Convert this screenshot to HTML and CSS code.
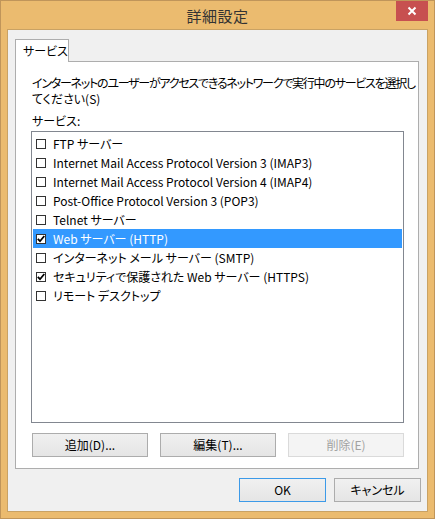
FILE: index.html
```html
<!DOCTYPE html>
<html lang="ja">
<head>
<meta charset="utf-8">
<link rel="stylesheet" href="styles.css">
</head>
<body>
<div class="window">
  <div class="titlebar">
    <div class="title">詳細設定</div>
    <div class="close"><svg width="10" height="10" viewBox="0 0 10 10"><path d="M1.5 1.5 L8.5 8.5 M8.5 1.5 L1.5 8.5" stroke="#fff" stroke-width="2" fill="none"/></svg></div>
  </div>
  <div class="client">
    <div class="tabs"><div class="tab">サービス</div></div>
    <div class="panel">
      <p class="desc"><span class="line">インターネットのユーザーがアクセスできるネットワークで実行中のサービスを選択し</span><span class="line">てください(S)</span></p>
      <div class="label">サービス:</div>
      <div class="listbox">
        <div class="row"><span class="cb"></span><span>FTP サーバー</span></div>
        <div class="row"><span class="cb"></span><span>Internet Mail Access Protocol Version 3 (IMAP3)</span></div>
        <div class="row"><span class="cb"></span><span>Internet Mail Access Protocol Version 4 (IMAP4)</span></div>
        <div class="row"><span class="cb"></span><span>Post-Office Protocol Version 3 (POP3)</span></div>
        <div class="row"><span class="cb"></span><span>Telnet サーバー</span></div>
        <div class="row selected"><span class="cb checked"><svg width="8" height="8" viewBox="0 0 8 8"><path d="M0.8 3.8 L3 6.2 L7.3 1" stroke="#000" stroke-width="1.8" fill="none"/></svg></span><span>Web サーバー (HTTP)</span></div>
        <div class="row"><span class="cb"></span><span>インターネット メール サーバー (SMTP)</span></div>
        <div class="row"><span class="cb checked"><svg width="8" height="8" viewBox="0 0 8 8"><path d="M0.8 3.8 L3 6.2 L7.3 1" stroke="#000" stroke-width="1.8" fill="none"/></svg></span><span>セキュリティで保護された Web サーバー (HTTPS)</span></div>
        <div class="row"><span class="cb"></span><span>リモート デスクトップ</span></div>
      </div>
      <div class="panel-buttons">
        <div class="btn">追加(D)...</div>
        <div class="btn">編集(T)...</div>
        <div class="btn disabled">削除(E)</div>
      </div>
    </div>
    <div class="dialog-buttons">
      <div class="btn small default">OK</div>
      <div class="btn small">キャンセル</div>
    </div>
  </div>
</div>
</body>
</html>
```

FILE: styles.css
```css
html, body {
  margin: 0;
  padding: 0;
  background: #ebbb6f;
}
body {
  font-family: "Noto Sans CJK JP", "Noto Sans", sans-serif;
  font-feature-settings: "palt";
  font-size: 12px;
  color: #000;
}
.window {
  box-sizing: border-box;
  width: 435px;
  height: 519px;
  border: 1px solid #c0955a;
  background: #ebbb6f;
  padding: 0 6px 6px 6px;
  display: flex;
  flex-direction: column;
}
.titlebar {
  height: 28px;
  display: grid;
  grid-template-columns: 1fr auto 1fr;
  align-items: start;
}
.title {
  grid-column: 2;
  font-size: 15px;
  line-height: 30px;
  color: #333;
  letter-spacing: 0.5px;
}
.close {
  grid-column: 3;
  justify-self: end;
  width: 32px;
  height: 20px;
  background: #c75050;
  display: flex;
  align-items: center;
  justify-content: center;
}
.client {
  flex: 1;
  border: 1px solid #c9a264;
  background: #f0f0f0;
  padding: 9px 8px 0 7px;
  display: flex;
  flex-direction: column;
}
.tabs {
  display: flex;
  height: 22px;
}
.tab {
  position: relative;
  z-index: 1;
  box-sizing: border-box;
  width: 54px;
  height: 23px;
  border: 1px solid #adadad;
  border-bottom: none;
  background: #fff;
  line-height: 21px;
  padding-left: 7px;
}
.panel {
  box-sizing: border-box;
  height: 408px;
  border: 1px solid #adadad;
  background: #fff;
  padding: 13px 14px 0 15px;
}
.desc {
  margin: 0 0 6px 1px;
  line-height: 16px;
  white-space: nowrap;
  display: flex;
  flex-direction: column;
}
.desc .line:first-child {
  letter-spacing: -1.25px;
}
.label {
  margin-left: 1px;
  line-height: 16px;
  margin-bottom: 2px;
}
.listbox {
  box-sizing: border-box;
  height: 292px;
  border: 1px solid #828790;
  padding: 2px 1px 0 1px;
}
.row {
  height: 19px;
  display: flex;
  align-items: center;
  padding-left: 3px;
  line-height: 19px;
  white-space: nowrap;
}
.row.selected {
  background: #3399ff;
  color: #fff;
}
.cb {
  box-sizing: border-box;
  width: 10px;
  height: 10px;
  border: 1px solid #333;
  background: #fff;
  margin-right: 7px;
  display: flex;
  align-items: center;
  justify-content: center;
}
.panel-buttons {
  display: flex;
  gap: 12px;
  margin: 10px 0 0 1px;
}
.btn {
  box-sizing: border-box;
  width: 116px;
  height: 24px;
  border: 1px solid #acacac;
  background: linear-gradient(#f0f0f0, #e5e5e5);
  text-align: center;
  line-height: 22px;
}
.btn.disabled {
  background: #f4f4f4;
  border-color: #dadada;
  color: #a2a2a2;
}
.dialog-buttons {
  display: flex;
  justify-content: flex-end;
  gap: 8px;
  margin-top: 9px;
  margin-right: -2px;
}
.btn.small {
  width: 87px;
}
.btn.default {
  border-color: #3c9ae8;
}
```
